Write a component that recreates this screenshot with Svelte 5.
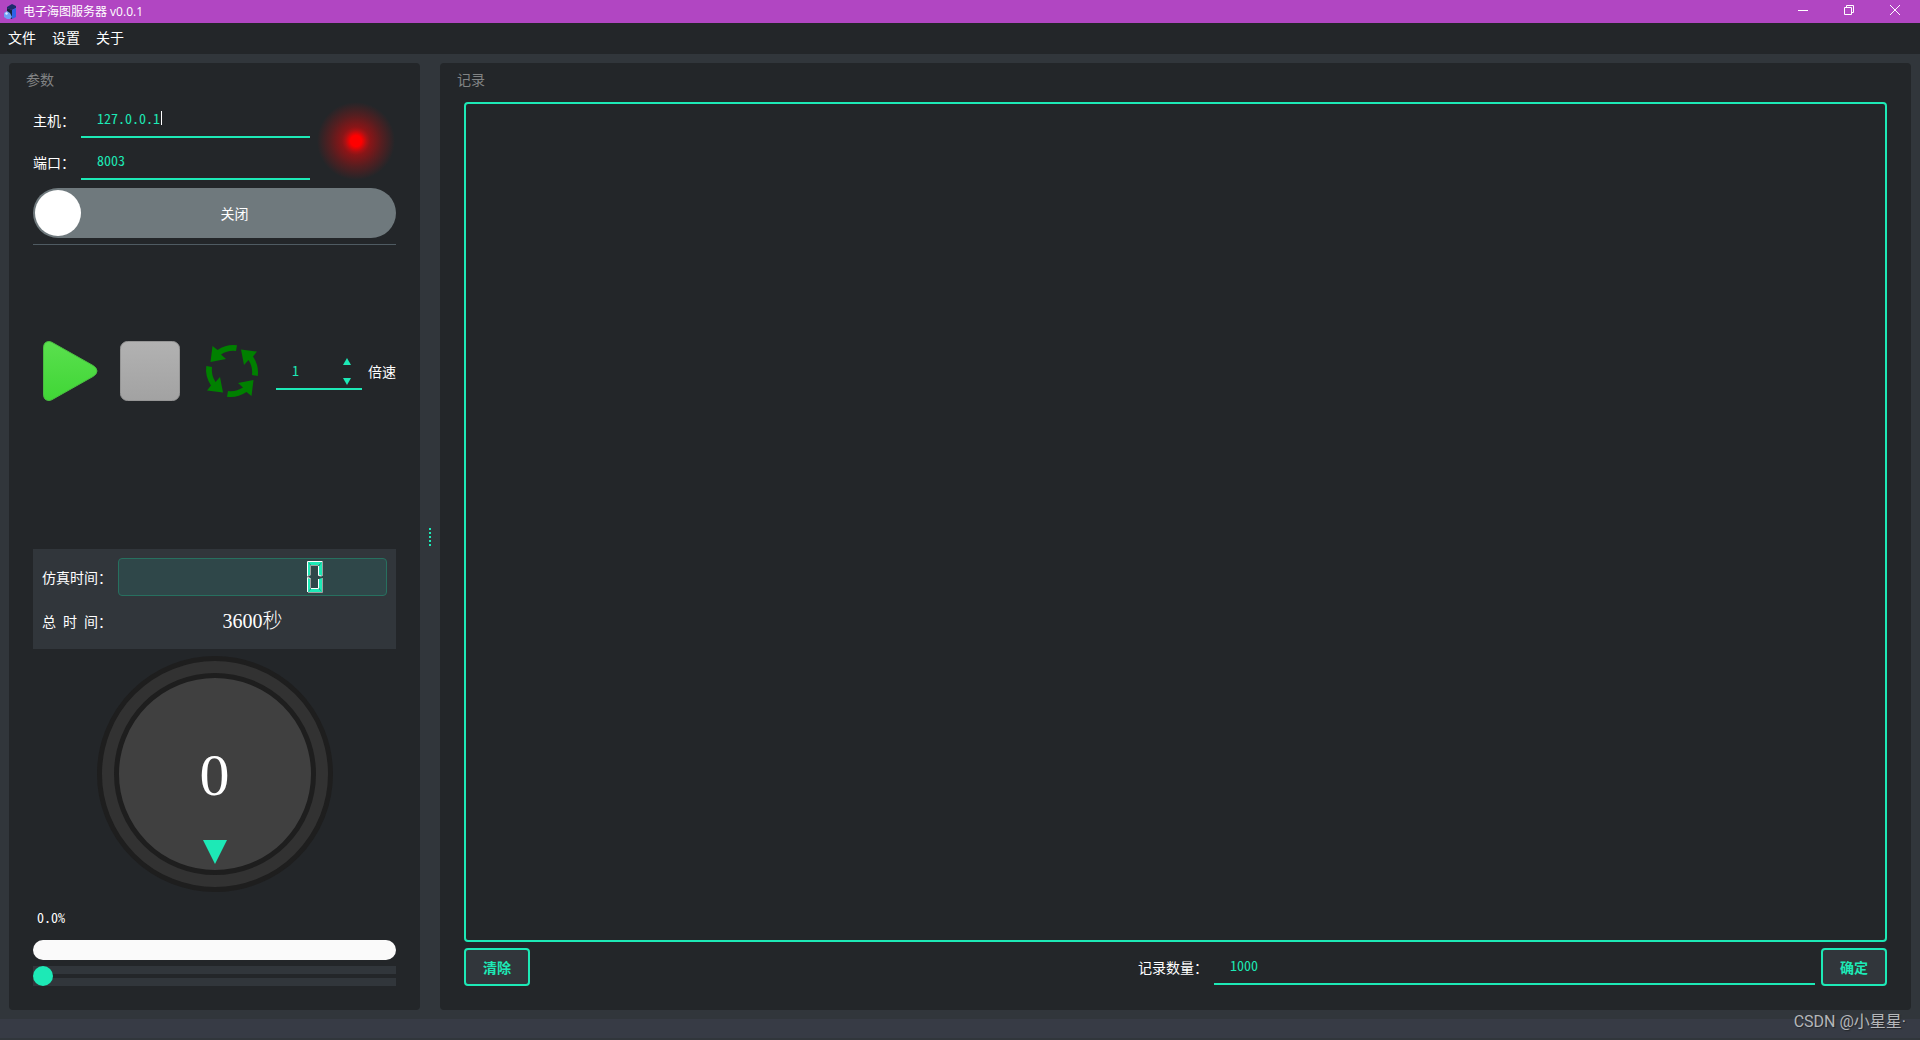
<script>
  let host = $state('127.0.0.1');
  let port = $state('8003');
  let speed = $state(1);
  let recordLimit = $state('1000');
  let progress = $state(0);
  let enabled = $state(false);
  let log = $state('');
  const totalSeconds = 3600;
  const stepUp = () => (speed += 1);
  const stepDown = () => (speed = Math.max(1, speed - 1));
</script>

<div class="window">
  <header class="titlebar">
    <svg class="logo" viewBox="0 0 14 16" aria-hidden="true">
      <path d="M3 3 8 0l4 2v2L8 6 3 4z" fill="#1c2c6b" />
      <path d="M3 4l5 2v9l-5-2z" fill="#17243f" />
      <path d="M8 6l4-2v9l-4 2z" fill="#2f62e6" />
      <path d="M0 9l3-2 3 2 2 4-2 2H3L0 13z" fill="#6ea0f5" />
      <path d="M1 9l2-1 1 2-2 1z" fill="#dbe8ff" />
    </svg>
    <h1>电子海图服务器 v0.0.1</h1>
    <div class="window-buttons">
      <button aria-label="最小化"><svg viewBox="0 0 12 12"><path d="M1 6.500h10" /></svg></button>
      <button aria-label="还原"><svg viewBox="0 0 12 12"><path d="M1.500 3.500h7v7h-7zM3.500 3.500v-2h7v7h-2" /></svg></button>
      <button aria-label="关闭窗口"><svg viewBox="0 0 12 12"><path d="M1 1l10 10M11 1L1 11" /></svg></button>
    </div>
  </header>

  <nav class="menubar">
    <button>文件</button>
    <button>设置</button>
    <button>关于</button>
  </nav>

  <main>
    <section class="panel params">
      <h2>参数</h2>
      <div class="params-body">
        <div class="connection">
          <div class="fields">
            <label for="host">主机：</label>
            <div class="line-edit host-edit">
              <input id="host" type="text" size="9" bind:value={host} /><span class="caret"></span>
            </div>
            <label for="port">端口：</label>
            <div class="line-edit"><input id="port" type="text" bind:value={port} /></div>
          </div>
          <div class="lamp"></div>
        </div>

        <button class="switch" class:on={enabled} role="switch" aria-checked={enabled} onclick={() => (enabled = !enabled)}>
          <span class="knob"></span>
          <span class="switch-text">{enabled ? '开启' : '关闭'}</span>
        </button>

        <hr />

        <div class="playback">
          <button class="icon" aria-label="播放">
            <svg viewBox="0 0 64 64">
              <defs>
                <linearGradient id="green" x2="0" y2="1"><stop offset="0" stop-color="#5ae04e" /><stop offset="1" stop-color="#40d636" /></linearGradient>
                <linearGradient id="gray" x2="0" y2="1"><stop offset="0" stop-color="#b2b2b2" /><stop offset="1" stop-color="#a2a2a2" /></linearGradient>
              </defs>
              <path d="M7.500 9Q7.500 2.500 13 2.500 15 2.500 18 4.500L57 26.500Q61 29 61 32 61 35 57 37.500L18 59.500Q15 61.500 13 61.500 7.500 61.500 7.500 55Z" fill="url(#green)" stroke="#49bd40" />
            </svg>
          </button>
          <button class="icon" aria-label="停止">
            <svg viewBox="0 0 64 64"><rect x="2.500" y="2.500" width="59" height="59" rx="7" fill="url(#gray)" stroke="#969696" /></svg>
          </button>
          <button class="icon" aria-label="循环">
            <svg viewBox="0 0 64 64">
              <g fill="#008000">
                {#each [0, 90, 180, 270] as angle}
                  <path transform="rotate({angle} 32 32)" d="M37 6.300Q27 4.800 17.500 11L12.500 7 10.500 23 26 20 21 15.500Q28 11 36 12Z" />
                {/each}
              </g>
            </svg>
          </button>
          <div class="spin">
            <input id="speed" type="text" bind:value={speed} />
            <div class="spin-buttons">
              <button aria-label="增加" onclick={stepUp}><svg viewBox="0 0 8 8"><path d="M4 0l4 7H0z" /></svg></button>
              <button aria-label="减少" onclick={stepDown}><svg viewBox="0 0 8 8"><path d="M4 8L0 1h8z" /></svg></button>
            </div>
          </div>
          <label for="speed">倍速</label>
        </div>

        <div class="times">
          <span class="time-label">仿真时间：</span>
          <div class="lcd">
            <svg viewBox="0 0 16 32" role="img" aria-label="0">
              <path d="M1 1h14l-4 4H5zM1 1l3 4v9l-3 1zM15 1l-3 4v9l3 1zM1 17l3 1v9l-3 4zM15 17l-3 1v9l3 4zM1 31l4-4h6l4 4z" fill="#1de9b6" />
              <path d="M.5 15.500V.5h15M11.500 5v9.500l3 .5M.5 31V16.500l3 1M11.500 18v9.500H4" fill="none" stroke="#fff" />
              <path d="M15.500 1v14M11 4.500H3.500V14l-3 1.500M3.500 18v9M1 31.500h14.500V17" fill="none" stroke="#a0a0a0" />
            </svg>
          </div>
          <span class="time-label spread"><span>总</span><span>时</span><span>间：</span></span>
          <output class="total">{totalSeconds}秒</output>
        </div>

        <div class="dial">
          <div class="dial-face">
            <span class="dial-value">{progress}</span>
            <svg class="pointer" viewBox="0 0 24 24"><path d="M0 0h24L12 24z" fill="#1de9b6" /></svg>
          </div>
        </div>

        <div class="percent">{progress.toFixed(1)}%</div>
        <div class="bar" role="progressbar" aria-label="进度" aria-valuenow={progress}></div>
        <input class="slider" type="range" min="0" max="100" aria-label="进度" bind:value={progress} />
      </div>
    </section>

    <div class="splitter"><i></i><i></i><i></i><i></i><i></i></div>

    <section class="panel records">
      <h2>记录</h2>
      <div class="records-body">
        <textarea aria-label="记录" readonly value={log}></textarea>
        <div class="actions">
          <button class="push" onclick={() => (log = '')}>清除</button>
          <div class="limit">
            <label for="limit">记录数量：</label>
            <div class="line-edit"><input id="limit" type="text" bind:value={recordLimit} /></div>
            <button class="push">确定</button>
          </div>
        </div>
      </div>
    </section>
  </main>

  <footer class="statusbar"></footer>
  <span class="watermark">CSDN @小星星·</span>
</div>

<style>
  :global(body) {
    background: #31363b;
  }
  .window {
    --accent: #1de9b6;
    --dark: #232629;
    --mid: #31363b;
    position: relative;
    display: flex;
    flex-direction: column;
    min-height: 100vh;
    box-sizing: border-box;
    overflow: hidden;
    background: var(--mid);
    color: #fff;
    font: 400 14px/20px 'Noto Sans CJK SC', sans-serif;
    font-feature-settings: 'hwid';
  }
  .window :global(*) {
    box-sizing: border-box;
  }
  button,
  input,
  textarea {
    margin: 0;
    padding: 0;
    border: 0;
    background: none;
    color: inherit;
    font: inherit;
    font-feature-settings: inherit;
    outline: none;
  }
  svg {
    display: block;
  }
  h1,
  h2 {
    margin: 0;
    font-size: 14px;
    font-weight: 400;
  }

  .titlebar {
    display: flex;
    flex: none;
    align-items: center;
    height: 23px;
    padding-left: 4px;
    background: #b146c2;
  }
  .logo {
    width: 14px;
    height: 16px;
    margin-right: 5px;
  }
  h1 {
    font-size: 12px;
    line-height: 20px;
    font-feature-settings: normal;
    font-family: 'Open Sans', 'Noto Sans CJK SC', sans-serif;
  }
  .window-buttons {
    display: flex;
    align-self: flex-start;
    margin-left: auto;
    padding-right: 2px;
  }
  .window-buttons button {
    display: grid;
    place-items: center;
    width: 46px;
    height: 20px;
  }
  .window-buttons svg {
    width: 12px;
    height: 12px;
    fill: none;
    stroke: #fff;
  }

  .menubar {
    display: flex;
    flex: none;
    gap: 16px;
    height: 31px;
    padding: 0 8px 3px;
    background: var(--dark);
  }

  main {
    display: flex;
    flex: 1;
    padding: 9px;
  }
  .panel {
    display: flex;
    flex-direction: column;
    padding: 6px 24px 24px;
    border-radius: 4px;
    background: var(--dark);
  }
  .panel h2 {
    margin: 0 0 13px -7px;
    color: #818384;
  }
  .params {
    width: 411px;
    flex: none;
  }
  .params-body {
    display: flex;
    flex: 1;
    flex-direction: column;
  }
  .connection {
    display: flex;
    align-items: center;
    justify-content: space-between;
  }
  .fields {
    display: grid;
    grid-template-columns: 48px 229px;
    row-gap: 6px;
    align-items: center;
  }
  .line-edit {
    display: flex;
    align-items: center;
    height: 36px;
    padding: 0 16px 2px;
    border-bottom: 2px solid var(--accent);
    color: var(--accent);
  }
  .line-edit input {
    width: 100%;
  }
  .host-edit input {
    width: 64px;
  }
  .caret {
    width: 1px;
    height: 14px;
    background: #fff;
  }
  .lamp {
    width: 78px;
    height: 78px;
    margin-right: 1px;
    border-radius: 50%;
    background: radial-gradient(closest-side, #f00 0, #f00 14%, #a81214 28%, #8a1517 36%, #551e20 66%, #232629 100%);
  }
  .switch {
    display: flex;
    align-items: center;
    height: 50px;
    margin-top: 8px;
    padding: 2px;
    border-radius: 25px;
    background: #6f797d;
  }
  .switch.on {
    flex-direction: row-reverse;
    background: #12a583;
  }
  .knob {
    width: 46px;
    height: 46px;
    border-radius: 50%;
    background: #fff;
  }
  .switch-text {
    flex: 1;
    padding-right: 6px;
    text-align: center;
  }
  hr {
    width: 100%;
    height: 1px;
    margin: 6px 0 0;
    border: 0;
    background: #4f5b62;
  }
  .playback {
    display: flex;
    flex: 1;
    align-items: center;
    padding: 0 0 52px 3px;
  }
  .icon {
    flex: none;
    width: 64px;
    height: 64px;
    margin-right: 18px;
  }
  .icon svg {
    width: 64px;
    height: 64px;
  }
  .icon + .spin {
    margin-left: -6px;
  }
  .spin {
    display: flex;
    flex: 1;
    min-width: 0;
    height: 38px;
    padding: 0 11px 0 16px;
    border-bottom: 2px solid var(--accent);
    color: var(--accent);
  }
  .spin input {
    flex: 1;
    min-width: 0;
  }
  .spin-buttons {
    display: flex;
    flex-direction: column;
    justify-content: space-between;
    padding: 6px 0 3px;
  }
  .spin-buttons svg {
    width: 8px;
    height: 8px;
    fill: var(--accent);
  }
  .playback label {
    flex: none;
    padding-left: 6px;
  }
  .times {
    display: grid;
    grid-template-columns: 76px 1fr;
    row-gap: 12px;
    align-items: center;
    height: 100px;
    padding: 9px;
    background: var(--mid);
    align-content: start;
  }
  .time-label {
    white-space: nowrap;
  }
  .spread {
    display: flex;
    gap: 7px;
  }
  .lcd {
    display: flex;
    justify-content: flex-end;
    align-items: center;
    height: 38px;
    padding-right: 63px;
    border: 1px solid #27705f;
    border-radius: 4px;
    background: #2f4749;
  }
  .lcd svg {
    width: 16px;
    height: 32px;
  }
  .total {
    font-family: 'Liberation Serif', 'Noto Sans CJK SC', serif;
    font-size: 20px;
    font-weight: 300;
    line-height: 26px;
    text-align: center;
    font-feature-settings: normal;
  }
  .dial {
    align-self: center;
    width: 236px;
    height: 236px;
    margin-top: 7px;
    padding: 12px;
    border: 5px solid #1e1e1e;
    border-radius: 50%;
    background: #323232;
  }
  .dial-face {
    display: flex;
    flex-direction: column;
    align-items: center;
    justify-content: flex-end;
    height: 100%;
    padding-bottom: 6px;
    border: 5px solid #1e1e1e;
    border-radius: 50%;
    background: #404040;
  }
  .dial-value {
    font: 400 60px/68px 'Liberation Serif', serif;
  }
  .pointer {
    width: 24px;
    height: 24px;
    margin-top: 31px;
  }
  .percent {
    margin: 15px 0 13px 4px;
  }
  .bar {
    height: 20px;
    border-radius: 10px;
    background: #fafafa;
  }
  .slider {
    width: 100%;
    height: 20px;
    margin-top: 6px;
    appearance: none;
    background: linear-gradient(var(--mid) 8px, var(--dark) 8px 12px, var(--mid) 12px);
  }
  .slider::-webkit-slider-thumb {
    appearance: none;
    width: 20px;
    height: 20px;
    border-radius: 50%;
    background: var(--accent);
  }
  .splitter {
    display: flex;
    flex: none;
    flex-direction: column;
    align-items: center;
    justify-content: center;
    gap: 2px;
    width: 20px;
  }
  .splitter i {
    width: 2px;
    height: 2px;
    background: var(--accent);
  }
  .records {
    flex: 1;
  }
  .records-body {
    display: flex;
    flex: 1;
    flex-direction: column;
    gap: 6px;
  }
  textarea {
    flex: 1;
    width: 100%;
    border: 2px solid var(--accent);
    border-radius: 4px;
    resize: none;
  }
  .actions {
    display: grid;
    grid-template-columns: 9fr 10fr;
  }
  .push {
    width: 66px;
    height: 38px;
    border: 2px solid var(--accent);
    border-radius: 4px;
    background: var(--mid);
    color: var(--accent);
    font-weight: 700;
  }
  .limit {
    display: flex;
    align-items: center;
  }
  .limit label {
    padding-right: 6px;
    white-space: nowrap;
  }
  .limit .line-edit {
    flex: 1;
    margin-right: 6px;
  }
  .statusbar {
    flex: none;
    height: 21px;
    border-bottom: 2px solid #31363b;
    background: #373b45;
  }
  .watermark {
    position: absolute;
    right: 14px;
    bottom: 8px;
    color: #b4b6b9;
    font: 400 16px/20px Roboto, 'Noto Sans CJK SC', sans-serif;
    font-feature-settings: normal;
    text-shadow: 1px 1px 1px #232629;
  }
</style>
